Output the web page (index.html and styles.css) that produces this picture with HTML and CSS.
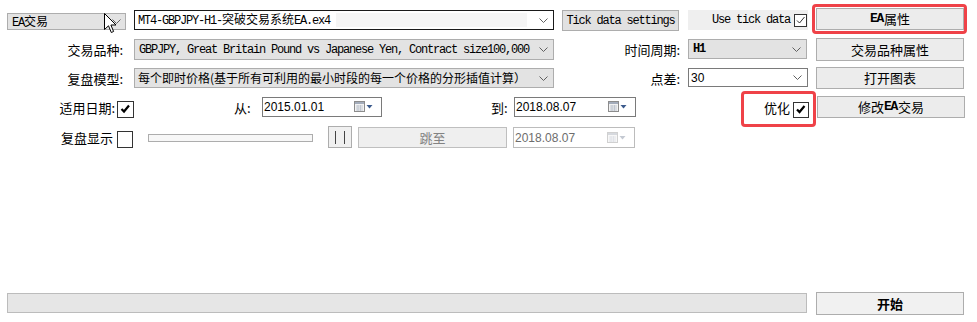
FILE: index.html
```html
<!DOCTYPE html>
<html lang="zh-CN">
<head>
<meta charset="utf-8">
<title>Strategy Tester</title>
<link rel="stylesheet" href="styles.css">
</head>
<body>
<div class="panel">
  <div class="row r1">
    <div class="combo gray ea"><span class="txt"><span class="mono">EA</span>交易</span><svg class="chev" width="9" height="5" viewBox="0 0 9 5"><path d="M0.5 0.5L4.5 4.5L8.5 0.5" fill="none" stroke="#606060"/></svg></div>
    <div class="combo focus mt4"><span class="txt mono">MT4-GBPJPY-H1-<span class="cj">突破交易系统</span>EA.ex4</span><span class="selpad"></span><svg class="chev" width="9" height="5" viewBox="0 0 9 5"><path d="M0.5 0.5L4.5 4.5L8.5 0.5" fill="none" stroke="#606060"/></svg></div>
    <div class="btn tick mono">Tick data settings</div>
    <div class="usetick"><span class="mono">Use tick data</span><span class="cb small"><svg width="11" height="11" viewBox="0 0 11 11"><path d="M2 5.5L4.5 8L9.5 2" fill="none" stroke="#333" stroke-width="1"/></svg></span></div>
    <div class="btn side"><span class="mono b">EA</span>属性</div>
  </div>

  <div class="row r2">
    <div class="lbl l1">交易品种:</div>
    <div class="combo gray wide c2"><span class="txt mono">GBPJPY, Great Britain Pound vs Japanese Yen, Contract size100,000</span><svg class="chev" width="9" height="5" viewBox="0 0 9 5"><path d="M0.5 0.5L4.5 4.5L8.5 0.5" fill="none" stroke="#606060"/></svg></div>
    <div class="lbl l2">时间周期:</div>
    <div class="combo gray small-combo h1"><span class="txt mono b">H1</span><svg class="chev" width="9" height="5" viewBox="0 0 9 5"><path d="M0.5 0.5L4.5 4.5L8.5 0.5" fill="none" stroke="#606060"/></svg></div>
    <div class="btn side s2">交易品种属性</div>
  </div>

  <div class="row r3">
    <div class="lbl l1">复盘模型:</div>
    <div class="combo gray wide c3"><span class="txt cjtxt">每个即时价格(基于所有可利用的最小时段的每一个价格的分形插值计算）</span><svg class="chev" width="9" height="5" viewBox="0 0 9 5"><path d="M0.5 0.5L4.5 4.5L8.5 0.5" fill="none" stroke="#606060"/></svg></div>
    <div class="lbl l2">点差:</div>
    <div class="combo white small-combo sp"><span class="txt sans">30</span><svg class="chev" width="9" height="5" viewBox="0 0 9 5"><path d="M0.5 0.5L4.5 4.5L8.5 0.5" fill="none" stroke="#606060"/></svg></div>
    <div class="btn side s3">打开图表</div>
  </div>

  <div class="row r4">
    <div class="lbl l4">适用日期:</div>
    <span class="cb big c4"><svg width="15" height="15" viewBox="0 0 15 15"><path d="M3.5 7L6 9.5L11 3.5" fill="none" stroke="#000" stroke-width="2.2"/></svg></span>
    <div class="lbl from">从:</div>
    <div class="date d1"><span class="sans">2015.01.01</span><svg class="cal" width="20" height="12" viewBox="0 0 20 12"><rect x="0.5" y="0.5" width="10" height="10" fill="#f2f2f2" stroke="#8c8c8c"/><rect x="1" y="1" width="9" height="2" fill="#a3acbb"/><path d="M2 5h7M2 7h7M2 9h7M4 4v6M6.5 4v6" stroke="#b9c0cc" stroke-width="0.8"/><path d="M12.5 4H18.5L15.5 7.5Z" fill="#3b5a8c"/></svg></div>
    <div class="lbl to">到:</div>
    <div class="date d2"><span class="sans">2018.08.07</span><svg class="cal" width="20" height="12" viewBox="0 0 20 12"><rect x="0.5" y="0.5" width="10" height="10" fill="#f2f2f2" stroke="#8c8c8c"/><rect x="1" y="1" width="9" height="2" fill="#a3acbb"/><path d="M2 5h7M2 7h7M2 9h7M4 4v6M6.5 4v6" stroke="#b9c0cc" stroke-width="0.8"/><path d="M12.5 4H18.5L15.5 7.5Z" fill="#3b5a8c"/></svg></div>
    <div class="lbl opt">优化</div>
    <span class="cb big c5"><svg width="14" height="14" viewBox="0 0 14 14"><path d="M3 6.5L5.5 9L10.5 3" fill="none" stroke="#000" stroke-width="2.2"/></svg></span>
    <div class="btn side s4">修改<span class="mono b">EA</span>交易</div>
  </div>

  <div class="row r5">
    <div class="lbl l5">复盘显示</div>
    <span class="cb big c6"></span>
    <div class="track"></div>
    <div class="btn pause"><span class="bar"></span><span class="bar"></span></div>
    <div class="btn jump">跳至</div>
    <div class="date disabled d3"><span class="sans">2018.08.07</span><svg class="cal" width="20" height="12" viewBox="0 0 20 12"><rect x="0.5" y="0.5" width="10" height="10" fill="#f7f7f7" stroke="#d0d0d0"/><rect x="1" y="1" width="9" height="2" fill="#d6d9de"/><path d="M2 5h7M2 7h7M2 9h7M4 4v6M6.5 4v6" stroke="#dde0e6" stroke-width="0.8"/><path d="M12.5 4H18.5L15.5 7.5Z" fill="#c4c9d2"/></svg></div>
  </div>

  <div class="row rb">
    <div class="progress"></div>
    <div class="btn side start">开始</div>
  </div>

  <div class="mark m1"></div>
  <div class="mark m2"></div>
  <svg class="cursor" width="14" height="21" viewBox="0 0 14 21"><path d="M0.5 0.5V16.5L4.5 12.8L7.3 19.5L9.6 18.5L6.9 12H12Z" fill="#fff" stroke="#000" stroke-width="1"/></svg>
</div>
</body>
</html>
```

FILE: styles.css
```css
* { box-sizing: border-box; }

body {
  margin: 0;
  background: #ffffff;
  font-family: "Noto Sans CJK SC", "Liberation Sans", sans-serif;
  font-size: 13px;
  color: #000;
}

.panel {
  position: relative;
  width: 977px;
  height: 322px;
  overflow: hidden;
  background: #fff;
}

.row {
  display: flex;
  align-items: flex-start;
  height: 23px;
}

.r1 { margin-top: 8px; }
.r2 { margin-top: 7px; }
.r3 { margin-top: 6px; }
.r4 { margin-top: 6px; }
.r5 { margin-top: 7px; }
.rb { margin-top: 143px; }

.mono {
  font-family: "Liberation Mono", "Noto Sans CJK SC", monospace;
  font-size: 12px;
  letter-spacing: -1.2px;
}
.mono .cj, .cj {
  font-family: "Noto Sans CJK SC", sans-serif;
  font-size: 12px;
  letter-spacing: 0;
}
.b { font-weight: bold; }
.sans {
  font-family: "Liberation Sans", sans-serif;
  font-size: 12px;
}
.cjtxt {
  font-family: "Noto Sans CJK SC", sans-serif;
  font-size: 12px;
}

/* combos */
.combo {
  display: flex;
  align-items: center;
  border: 1px solid #adadad;
  line-height: 14px;
  white-space: nowrap;
}
.combo .txt { flex: 1; }
.combo .chev { flex: none; margin-right: 5px; }
.gray { background: #e3e3e3; }
.white { background: #fff; border-color: #7a7a7a; }

.ea {
  margin-left: 7px;
  margin-top: 5px;
  width: 119px;
  height: 17px;
  padding-left: 4px;
  font-size: 12px;
}
.ea .chev { margin-right: 4px; }

.mt4 {
  margin-left: 8px;
  margin-top: 2px;
  width: 420px;
  height: 20px;
  padding-left: 3px;
  background: #fff;
  border-color: #1a1a1a;
}
.mt4 .txt { flex: none; }
.mt4 .selpad {
  flex: 1;
  align-self: stretch;
  margin: 2px 12px 2px 6px;
  background: #f5f5f5;
}
.mt4 .chev { margin-right: 5px; }

.wide {
  margin-left: 11px;
  margin-top: 1px;
  width: 420px;
  padding-left: 4px;
}
.c2 { height: 21px; }
.c3 { height: 20px; padding-left: 3px; }

.small-combo {
  margin-left: 8px;
  margin-top: 1px;
  padding-left: 4px;
}
.h1 { width: 119px; height: 20px; }
.sp { width: 120px; height: 19px; padding-left: 2px; }

/* labels */
.lbl {
  line-height: 14px;
  white-space: nowrap;
  display: flex;
  align-items: center;
  height: 23px;
}
.l1 { width: 123px; justify-content: flex-end; }
.l2 { width: 126px; justify-content: flex-end; }
.l4 { width: 115px; justify-content: flex-end; }
.l5 { width: 113px; justify-content: flex-end; }
.from { margin-left: 100px; width: 20px; }
.to { margin-left: 109px; width: 18px; }
.opt { margin-left: 128px; width: 25px; }

/* buttons */
.btn {
  display: flex;
  align-items: center;
  justify-content: center;
  border: 1px solid #adadad;
  background: #e1e1e1;
  line-height: 14px;
  white-space: nowrap;
}
.tick {
  margin-left: 8px;
  margin-top: 2px;
  width: 117px;
  height: 21px;
}
.side {
  margin-left: 8px;
  width: 148px;
  height: 22px;
  background: #ececec;
}
.side .mono { font-size: 13px; letter-spacing: -1.4px; margin-right: 1px; }
.s2 { margin-left: 9px; height: 23px; }
.s4 { margin-left: 8px; }
.start {
  margin-left: 9px;
  height: 23px;
  background: #f1f1f1;
  font-weight: bold;
}

.usetick {
  margin-left: 9px;
  margin-top: 2px;
  width: 120px;
  height: 20px;
  background: #efefef;
  display: flex;
  align-items: center;
  justify-content: flex-end;
  line-height: 14px;
  white-space: nowrap;
}

/* checkboxes */
.cb {
  display: flex;
  align-items: center;
  justify-content: center;
  background: #fff;
  border: 1px solid #333;
  flex: none;
}
.cb.small {
  width: 13px;
  height: 13px;
  margin-left: 4px;
  margin-right: 1px;
}
.cb.big svg { display: block; }
.c4 { margin-left: 2px; margin-top: 5px; width: 17px; height: 17px; align-items: flex-start; }
.c5 { margin-left: 4px; margin-top: 6px; width: 16px; height: 16px; align-items: flex-start; }
.c6 { margin-left: 4px; margin-top: 5px; width: 16px; height: 17px; }

/* dates */
.date {
  display: flex;
  align-items: center;
  justify-content: space-between;
  border: 1px solid #7a7a7a;
  background: #fff;
  height: 20px;
  margin-top: 1px;
  padding-left: 1px;
  padding-right: 7px;
  line-height: 14px;
}
.d1 { margin-left: 8px; width: 120px; }
.d2 { margin-left: 5px; width: 122px; }
.d3 { margin-left: 6px; width: 122px; height: 21px; }
.disabled { border-color: #bcbcbc; color: #6d6d6d; }

.track {
  margin-left: 15px;
  margin-top: 8px;
  width: 165px;
  height: 8px;
  border: 1px solid #adadad;
  background: #f7f7f7;
}

.pause {
  margin-left: 15px;
  width: 24px;
  height: 22px;
  background: #f0f0f0;
  gap: 8px;
}
.pause .bar {
  width: 1px;
  height: 13px;
  background: #444;
}

.jump {
  margin-left: 6px;
  margin-top: 1px;
  width: 149px;
  height: 21px;
  background: #efefef;
  border-color: #bfbfbf;
  color: #838383;
}

.progress {
  margin-left: 7px;
  margin-top: 1px;
  width: 800px;
  height: 20px;
  background: #e6e6e6;
  border: 1px solid #bcbcbc;
}

/* annotation overlays */
.mark {
  position: absolute;
  border: 3px solid #ef4248;
  border-radius: 4px;
}
.m1 { left: 812px; top: 4px; width: 155px; height: 30px; }
.m2 { left: 741px; top: 91px; width: 75px; height: 36px; }

.cursor {
  position: absolute;
  left: 104px;
  top: 13px;
}
```
